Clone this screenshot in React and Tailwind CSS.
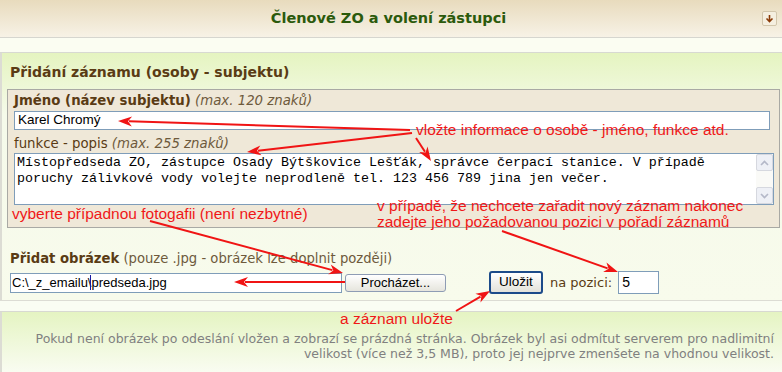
import React from "react";

const verdana = { fontFamily: '"DejaVu Sans", Verdana, sans-serif' };
const arial = { fontFamily: '"Liberation Sans", Arial, sans-serif' };

function Arrow({ x1, y1, x2, y2 }) {
  const dx = x2 - x1, dy = y2 - y1;
  const len = Math.sqrt(dx * dx + dy * dy);
  const ux = dx / len, uy = dy / len;
  const L = 14, W = 5;
  const bx = x2 - ux * L, by = y2 - uy * L;
  const p1 = `${bx - uy * W},${by + ux * W}`;
  const p2 = `${bx + uy * W},${by - ux * W}`;
  return (
    <g>
      <line x1={x1} y1={y1} x2={bx + ux * 3} y2={by + uy * 3} stroke="#f01414" strokeWidth="2" />
      <polygon points={`${x2},${y2} ${p1} ${bx + ux * 4},${by + uy * 4} ${p2}`} fill="#f01414" />
    </g>
  );
}

export default function App() {
  return (
    <div className="relative w-[782px] h-[372px] overflow-hidden bg-white text-[13px]" style={verdana}>
      {/* header */}
      <div className="h-[38px] flex items-center bg-gradient-to-b from-[#e8dbbd] to-[#f7f2e6] border-b border-[#d6d6cf]">
        <div className="flex-1" />
        <div className="text-[14.5px] font-bold text-[#2b5a0c] pr-[0px] pt-[1px]">Členové ZO a volení zástupci</div>
        <div className="flex-1 flex justify-end pr-[5px]">
          <div className="w-[15px] h-[15px] border border-[#d2c6ac] rounded-[2px] bg-[#f5efe0] flex items-center justify-center">
            <svg width="9" height="9" viewBox="0 0 9 9">
              <path d="M4.5 1 V7.5 M1.5 4.5 L4.5 7.5 L7.5 4.5" stroke="#8a3a08" strokeWidth="1.6" fill="none" />
            </svg>
          </div>
        </div>
      </div>
      <div className="h-[15px] bg-[#fbfdf2] border-b border-[#d8d9d2]" />

      {/* form section */}
      <div className="h-[248px] border-l-2 border-b border-[#dcdcd4] bg-gradient-to-b from-[#e5f4c0] via-[#f5faea] via-[25%] to-[#f8fbec] pl-[8px] pr-[2px] pt-[10px]">
        <div className="text-[14px] font-bold text-[#5a3b14] leading-[18px]">Přidání záznamu (osoby - subjektu)</div>
        <div className="mt-[8px] -ml-[3px] h-[139px] border border-[#a9a9a4] bg-[#efe8d8] pl-[6px] pr-[6px] pt-[3px]">
          <div className="leading-[16px] text-[13.3px]">
            <span className="font-bold text-[#5a3b14]">Jméno (název subjektu)</span>{" "}
            <span className="italic text-[#6e5a3c]">(max. 120 znaků)</span>
          </div>
          <div className="mt-[2px] h-[19px] w-[756px] border border-[#7f9db9] bg-white flex items-center pl-[3px] text-[13.5px] text-black" style={arial}>
            Karel Chromý
          </div>
          <div className="mt-[6px] leading-[16px] text-[13.3px] text-[#5a3b14]">
            funkce - popis <span className="italic text-[#6e5a3c]">(max. 255 znaků)</span>
          </div>
          <div className="mt-[1px] h-[52px] w-[760px] border border-[#7f9db9] bg-white flex">
            <div className="flex-1 pl-[2px] pt-[1px] text-[13.33px] leading-[16px] text-black" style={{ fontFamily: '"Liberation Mono", "Courier New", monospace' }}>
              Místopředseda ZO, zástupce Osady Býtškovice Lešťák, správce čerpací stanice. V případě
              <br />
              poruchy zálivkové vody volejte neprodleně tel. 123 456 789 jina jen večer.
            </div>
            <div className="w-[17px] flex flex-col justify-between bg-[#fafaf7]">
              <div className="h-[17px] border border-[#d6d8df] rounded-[2px] bg-[#eef0f6] flex items-center justify-center">
                <svg width="9" height="6" viewBox="0 0 9 6"><path d="M1 5 L4.5 1.5 L8 5" stroke="#b4b8c8" strokeWidth="1.6" fill="none" /></svg>
              </div>
              <div className="h-[17px] border border-[#d6d8df] rounded-[2px] bg-[#eef0f6] flex items-center justify-center">
                <svg width="9" height="6" viewBox="0 0 9 6"><path d="M1 1 L4.5 4.5 L8 1" stroke="#b4b8c8" strokeWidth="1.6" fill="none" /></svg>
              </div>
            </div>
          </div>
        </div>

        <div className="mt-[23px] leading-[16px] text-[13.2px] text-[#5a3b14] whitespace-nowrap">
          <span className="font-bold">Přidat obrázek</span>{" "}
          <span className="text-[#6e5a3c]">(pouze .jpg - obrázek lze doplnit později)</span>
        </div>
        <div className="mt-[4px] flex items-center" style={arial}>
          <div className="h-[20px] w-[332px] border border-[#7f9db9] bg-white flex items-center pl-[1px] text-[13px] text-black">
            C:\_z_emailu\<span className="inline-block w-[1px] h-[15px] bg-[#1a1aa0] -ml-[1px]" />predseda.jpg
          </div>
          <div className="ml-[3px] h-[18px] w-[101px] border border-[#8e9cb4] rounded-[3px] bg-gradient-to-b from-white to-[#e6e5dd] flex items-center justify-center text-[13px] text-black">
            Procházet...
          </div>
          <div className="ml-[43px] h-[23px] w-[54px] border-2 border-[#1c4b8a] rounded-[3px] bg-gradient-to-b from-white to-[#e3e2da] flex items-center justify-center text-[13.5px] text-black">
            Uložit
          </div>
          <span className="ml-[7px] text-[13px] text-[#5a3b14]" style={verdana}>na pozici:</span>
          <div className="ml-[6px] h-[23px] w-[41px] border border-[#7f9db9] bg-white flex items-center pl-[3px] text-[14px] text-black">5</div>
        </div>
      </div>

      <div className="h-[11px] bg-[#fafdf3] border-b border-[#d8d9d2]" />

      {/* note */}
      <div className="h-[60px] border-l-2 border-[#dcdcd4] bg-gradient-to-b from-[#e5f4c2] to-[#f9fcf1] pt-[19px] pr-[8px] text-right text-[12.5px] leading-[15px] text-[#808080]">
        Pokud není obrázek po odeslání vložen a zobrazí se prázdná stránka. Obrázek byl asi odmítut serverem pro nadlimitní
        <br />
        velikost (více než 3,5 MB), proto jej nejprve zmenšete na vhodnou velikost.
      </div>

      {/* red annotations */}
      <div className="absolute left-[416px] top-[121px] text-[15.5px] leading-[17px] text-[#f01818] whitespace-nowrap" style={arial}>
        vložte informace o osobě - jméno, funkce atd.
      </div>
      <div className="absolute left-[12px] top-[205px] text-[15.5px] leading-[17px] text-[#f01818] whitespace-nowrap" style={arial}>
        vyberte případnou fotogafii (není nezbytné)
      </div>
      <div className="absolute left-[377px] top-[198px] text-[15.5px] leading-[16px] text-[#f01818] whitespace-nowrap" style={arial}>
        v případě, že nechcete zařadit nový záznam nakonec
        <br />
        zadejte jeho požadovanou pozici v pořadí záznamů
      </div>
      <div className="absolute left-[340px] top-[310px] text-[15.5px] leading-[17px] text-[#f01818] whitespace-nowrap" style={arial}>
        a záznam uložte
      </div>

      <svg className="absolute inset-0 pointer-events-none" width="782" height="372">
        <Arrow x1={410} y1={130} x2={118} y2={121} />
        <Arrow x1={412} y1={133} x2={247} y2={152} />
        <Arrow x1={416} y1={138} x2={431} y2={161} />
        <Arrow x1={150} y1={221} x2={343} y2={273} />
        <Arrow x1={345} y1={282} x2={234} y2={282} />
        <Arrow x1={502} y1={231} x2={618} y2={272} />
        <Arrow x1={456} y1={311} x2={490} y2={291} />
      </svg>
    </div>
  );
}
